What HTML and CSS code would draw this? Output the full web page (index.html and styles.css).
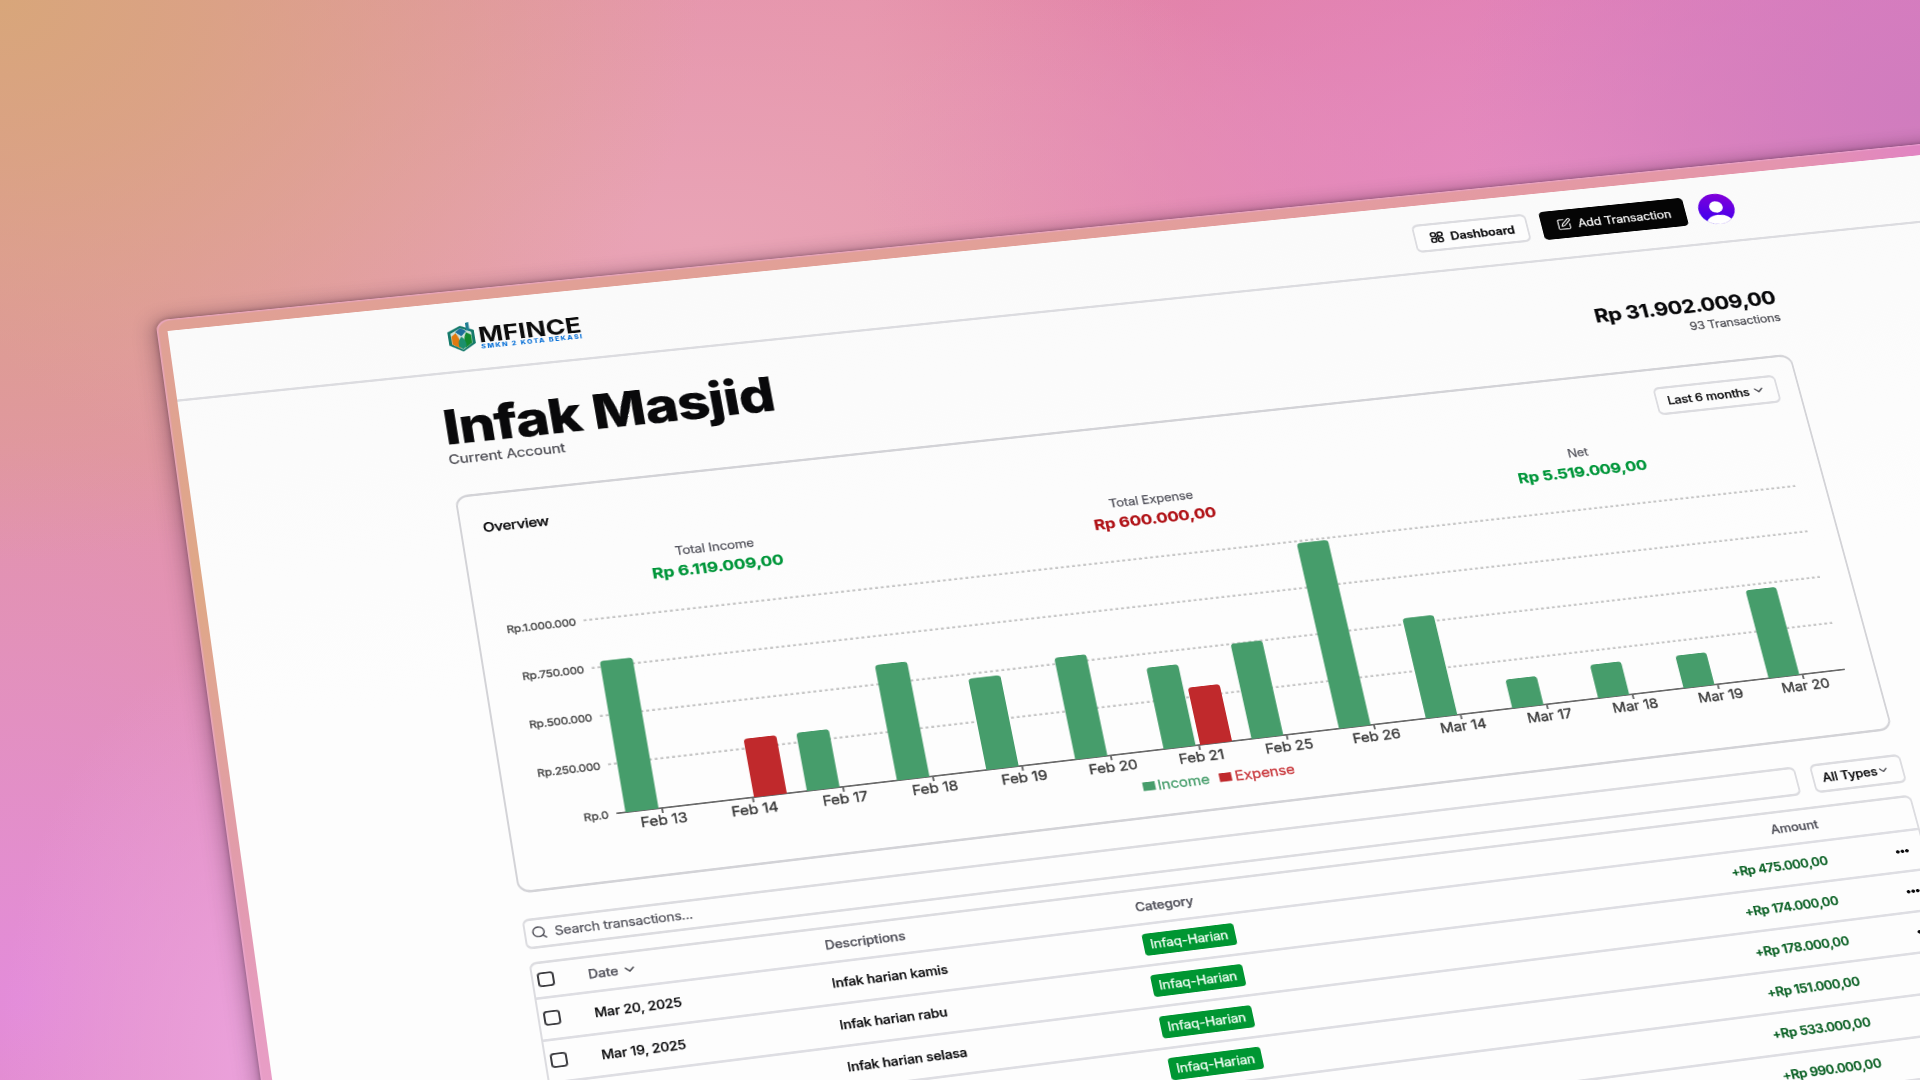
FILE: index.html
```html
<!DOCTYPE html>
<html lang="en">
<head>
<meta charset="utf-8">
<title>MFINCE</title>
<link rel="stylesheet" href="styles.css">
</head>
<body>
<div class="stage">
  <div class="frame">
    <div class="window">
      <header class="topbar">
        <svg class="logo" width="142" height="40" viewBox="0 0 142 40">
          <path d="M14 5 L28 12 V29 L14 38.500 L0 29 V12 Z" fill="#157a6b"/>
          <path d="M14 8 L25 14 V28 L14 36 L3 28 V14 Z" fill="#cfe3da"/>
          <path d="M8.500 14 Q13 22 11.500 34 L3.500 28 V18 Z" fill="#e07a10"/>
          <path d="M19.500 14 Q15 22 16.500 34 L24.500 28 V18 Z" fill="#128a2e"/>
          <path d="M14 19 Q19 25 17.800 31.500 L14 35.500 L10.200 31.500 Q9 25 14 19 Z" fill="#1b8f6d"/>
          <path d="M14 8 L20 12.500 L14 18.500 L8 12.500 Z" fill="#1d6f9c"/>
          <path d="M20 2 L23.500 1 V13 L20 11 Z" fill="#1f7f93"/>
          <text class="brand" x="32" y="29" textLength="109" lengthAdjust="spacingAndGlyphs">MFINCE</text>
          <text class="brand-sub" x="33" y="37.500" textLength="107">SMKN 2 KOTA BEKASI</text>
        </svg>
        <nav class="actions">
          <span class="btn">
            <svg class="icon" viewBox="0 0 24 24"><rect x="3" y="3" width="7.500" height="7.500" rx="3"/><rect x="13.500" y="3" width="7.500" height="7.500" rx="3"/><rect x="3" y="13.500" width="7.500" height="7.500" rx="3"/><rect x="13.500" y="13.500" width="7.500" height="7.500" rx="3"/><path d="M10 14 L14 10"/></svg>
            Dashboard
          </span>
          <span class="btn btn-dark">
            <svg class="icon thin" viewBox="0 0 24 24"><path d="M12 3H5a2 2 0 0 0-2 2v14a2 2 0 0 0 2 2h14a2 2 0 0 0 2-2v-7"/><path d="M18.400 2.600a2.100 2.100 0 0 1 3 3L12.400 14.600l-4 1 1-4z"/></svg>
            Add Transaction
          </span>
          <svg class="avatar" viewBox="0 0 40 40">
            <defs>
              <linearGradient id="av" x1="0.700" y1="0" x2="0.400" y2="1"><stop offset="0" stop-color="#8400d8"/><stop offset="1" stop-color="#3c00f0"/></linearGradient>
              <clipPath id="avc"><circle cx="20" cy="20" r="20"/></clipPath>
            </defs>
            <g clip-path="url(#avc)"><rect width="40" height="40" fill="url(#av)"/><circle cx="20" cy="17.500" r="7.500" fill="#fff"/><ellipse cx="20" cy="39" rx="14.500" ry="11" fill="#fff"/></g>
          </svg>
        </nav>
      </header>

      <main class="content">
        <section class="heading">
          <div>
            <h1 class="title">Infak Masjid</h1>
            <p class="subtitle">Current Account</p>
          </div>
          <div class="balance">
            <p class="balance-value">Rp 31.902.009,00</p>
            <p class="balance-count">93 Transactions</p>
          </div>
        </section>

        <section class="card">
          <div class="card-head">
            <span class="card-title">Overview</span>
            <span class="select">Last 6 months <svg class="chev" viewBox="0 0 24 24"><path d="m6 9 6 6 6-6"/></svg></span>
          </div>
          <div class="stats">
            <div class="stat"><span>Total Income</span><b class="pos">Rp 6.119.009,00</b></div>
            <div class="stat"><span>Total Expense</span><b class="neg">Rp 600.000,00</b></div>
            <div class="stat"><span>Net</span><b class="pos">Rp 5.519.009,00</b></div>
          </div>
          <svg class="chart" width="1408" height="320" viewBox="293 400 1408 320">
            <g class="grid"><path d="M380.200 415.700H1691M380.200 474.800H1691M380.200 533.800H1691M380.200 592.800H1691"/></g>
            <g class="ylab"><text x="372" y="421.500">Rp.1.000.000</text><text x="372" y="480.500">Rp.750.000</text><text x="372" y="539">Rp.500.000</text><text x="372" y="598">Rp.250.000</text><text x="372" y="657">Rp.0</text></g>
            <path class="axis" d="M380.200 652H1691M427 652v6M520.600 652v6M614.200 652v6M707.900 652v6M801.500 652v6M895.100 652v6M988.700 652v6M1082.300 652v6M1176 652v6M1269.600 652v6M1363.200 652v6M1456.800 652v6M1550.400 652v6M1644.100 652v6"/>
            <g class="income">
              <path d="M389.500 652V471.500q0-4 4-4h26q4 0 4 4V652z"/>
              <path d="M576.700 652V585q0-4 4-4h26q4 0 4 4V652z"/>
              <path d="M670.400 652V514q0-4 4-4h26q4 0 4 4V652z"/>
              <path d="M764 652V543.500q0-4 4-4h26q4 0 4 4V652z"/>
              <path d="M857.600 652V530q0-4 4-4h26q4 0 4 4V652z"/>
              <path d="M951.200 652V555q0-4 4-4h26q4 0 4 4V652z"/>
              <path d="M1044.800 652V537.500q0-4 4-4h26q4 0 4 4V652z"/>
              <path d="M1138.500 652V422.200q0-4 4-4h26q4 0 4 4V652z"/>
              <path d="M1232.100 652V530.200q0-4 4-4h26q4 0 4 4V652z"/>
              <path d="M1325.700 652V620q0-4 4-4h26q4 0 4 4V652z"/>
              <path d="M1419.300 652V614q0-4 4-4h26q4 0 4 4V652z"/>
              <path d="M1512.900 652V615q0-4 4-4h26q4 0 4 4V652z"/>
              <path d="M1606.600 652V544q0-4 4-4h26q4 0 4 4V652z"/>
              <rect x="921.500" y="689" width="13" height="10.500"/>
            </g>
            <g class="expense">
              <path d="M521.900 652V585q0-4 4-4h26q4 0 4 4V652z"/>
              <path d="M990 652V585q0-4 4-4h26q4 0 4 4V652z"/>
              <rect x="1002.500" y="689" width="13" height="10.500"/>
            </g>
            <g class="xlab"><text x="427" y="672">Feb 13</text><text x="520.600" y="672">Feb 14</text><text x="614.200" y="672">Feb 17</text><text x="707.900" y="672">Feb 18</text><text x="801.500" y="672">Feb 19</text><text x="895.100" y="672">Feb 20</text><text x="988.700" y="672">Feb 21</text><text x="1082.300" y="672">Feb 25</text><text x="1176" y="672">Feb 26</text><text x="1269.600" y="672">Mar 14</text><text x="1363.200" y="672">Mar 17</text><text x="1456.800" y="672">Mar 18</text><text x="1550.400" y="672">Mar 19</text><text x="1644.100" y="672">Mar 20</text></g>
            <text class="leg leg-income" x="937" y="700">Income</text>
            <text class="leg leg-expense" x="1019" y="700">Expense</text>
          </svg>
        </section>

        <section class="filters">
          <div class="search"><svg class="icon" viewBox="0 0 24 24"><circle cx="11" cy="11" r="8"/><path d="m21 21-4.300-4.300"/></svg>Search transactions...</div>
          <div class="types">All Types<svg class="chev" viewBox="0 0 24 24"><path d="m6 9 6 6 6-6"/></svg></div>
        </section>

        <section class="table">
          <div class="row head"><i class="check"></i><span class="date-head">Date <svg class="chev" viewBox="0 0 24 24"><path d="m6 9 6 6 6-6"/></svg></span><span>Descriptions</span><span>Category</span><span>Amount</span></div>
          <div class="row"><i class="check"></i><span>Mar 20, 2025</span><span>Infak harian kamis</span><span><em class="badge">Infaq-Harian</em></span><span class="amount">+Rp 475.000,00</span><i class="dots"></i></div>
          <div class="row"><i class="check"></i><span>Mar 19, 2025</span><span>Infak harian rabu</span><span><em class="badge">Infaq-Harian</em></span><span class="amount">+Rp 174.000,00</span><i class="dots"></i></div>
          <div class="row"><i class="check"></i><span>Mar 18, 2025</span><span>Infak harian selasa</span><span><em class="badge">Infaq-Harian</em></span><span class="amount">+Rp 178.000,00</span><i class="dots"></i></div>
          <div class="row"><i class="check"></i><span></span><span></span><span><em class="badge">Infaq-Harian</em></span><span class="amount">+Rp 151.000,00</span><i class="dots"></i></div>
          <div class="row"><i class="check"></i><span></span><span></span><span></span><span class="amount">+Rp 533.000,00</span><i class="dots"></i></div>
          <div class="row"><i class="check"></i><span></span><span></span><span></span><span class="amount">+Rp 990.000,00</span><i class="dots"></i></div>
          <div class="row"></div>
        </section>
      </main>
    </div>
  </div>
</div>
</body>
</html>
```
FILE: styles.css
```css
* { box-sizing: border-box; }
html, body { margin: 0; height: 100%; overflow: hidden; }
body {
  font-family: Inter, "Liberation Sans", sans-serif;
  color: #09090b;
  letter-spacing: -0.01em;
  -webkit-text-stroke: 0.25px currentColor;
}
h1, p { margin: 0; }

.stage {
  width: 1920px;
  height: 1080px;
  overflow: hidden;
  background:
    radial-gradient(ellipse 700px 560px at 0 0, #d8a67a 0%, #d8a67ac0 30%, #d8a67a00 100%),
    radial-gradient(ellipse 460px 360px at 1920px 110px, #d07cbe 0%, #d07cbe00 100%),
    radial-gradient(ellipse 700px 300px at 1560px 180px, #e58cc0 0%, #e58cc000 100%),
    radial-gradient(ellipse 760px 300px at 700px 240px, #e9a4b6 0%, #e9a4b600 100%),
    radial-gradient(ellipse 260px 420px at 260px 1060px, #eba2dc 0%, #eba2dc00 100%),
    radial-gradient(ellipse 500px 560px at 20px 1000px, #e38cda 0%, #e38cda00 100%),
    linear-gradient(90deg, #e294a8 0%, #e694ac 45%, #e281a6 62%, #de78c0 100%);
}

/* The browser window lies on a tilted plane, seen in perspective */
.frame {
  width: 2256px;
  height: 1400px;
  padding: 15px 15px 15px 11px;
  border-radius: 14px;
  transform-origin: 0 0;
  transform: matrix3d(0.972157, -0.0869527, 0, 0.0000305233, 0.0982337, 0.758452, 0, -0.000064023, 0, 0, 1, 0, 156.6044, 323.0285, 0, 1.00806744);
  background:
    linear-gradient(180deg, #e0a096 0, #dfa886 330px, #e29ab0 700px, #eb9fd0 1000px) 0 15px / 11px 100% no-repeat,
    linear-gradient(90deg, #e0a094 0, #e2a098 900px, #e498a6 1650px, #e494b0 1800px, #e07fc8 1990px);
  box-shadow:
    inset 1.500px 1.500px 1px rgba(240, 170, 215, 0.6),
    0 0 5px rgba(60, 30, 50, 0.4),
    -2px 0 22px rgba(60, 30, 50, 0.45);
}
.window {
  height: 100%;
  background: linear-gradient(180deg, #fafafa, #fdfdfd 500px);
}

.topbar {
  height: 91px;
  display: flex;
  align-items: center;
  justify-content: space-between;
  padding: 0 523px 0 289px;
  border-bottom: 3px solid #dcdce0;
}
.logo { margin-top: 3px; letter-spacing: 0; }
.brand { font-size: 27px; font-weight: 700; fill: #0c0c0c; }
.brand-sub { font-size: 7.5px; font-weight: 800; fill: #0b72d8; }
.actions { display: flex; align-items: center; gap: 15px; }
.btn {
  display: flex;
  align-items: center;
  gap: 7px;
  height: 38px;
  padding: 0 14px 0 15px;
  border: solid #dcdce0;
  border-width: 3px 2px;
  border-radius: 7px;
  background: #fdfdfd;
  font-size: 14px;
  font-weight: 600;
}
.btn-dark { padding: 0 15px; border-color: #050505; border-radius: 5px; background: #050505; color: #fafafa; font-weight: 400; }
.icon { width: 17px; height: 17px; fill: none; stroke: currentColor; stroke-width: 2.5; stroke-linecap: round; stroke-linejoin: round; }
.icon.thin { stroke-width: 1.8; }
.avatar { width: 41px; height: 41px; }

.content { width: 1456px; margin-left: 269px; padding-top: 36.5px; }
.heading { display: flex; justify-content: space-between; align-items: flex-end; margin-bottom: 34px; }
.title { font-size: 60px; line-height: 60px; font-weight: 800; letter-spacing: -0.95px; }
.subtitle { margin-top: -1px; font-size: 16px; line-height: 24px; color: #4b4b52; }
.balance { text-align: right; padding-bottom: 4.5px; }
.balance-value { font-size: 24px; line-height: 32px; font-weight: 700; letter-spacing: -0.016em; }
.balance-count { font-size: 14px; line-height: 20px; color: #4b4b52; letter-spacing: -0.015em; }

.card {
  height: 488px;
  padding: 22px 22px 0;
  border: solid #d3d3d7;
  border-width: 3px 2px;
  border-radius: 14px;
}
.card-head { display: flex; justify-content: space-between; align-items: center; }
.card-title { font-size: 16px; font-weight: 500; letter-spacing: -0.5px; }
.select {
  display: flex;
  align-items: center;
  justify-content: space-between;
  width: 138px;
  height: 37px;
  padding: 0 12px 0 11px;
  border: solid #dcdce0;
  border-width: 3px 2px;
  border-radius: 7px;
  font-size: 14px;
  font-weight: 500;
}
.chev { width: 16px; height: 16px; fill: none; stroke: #3f3f46; stroke-width: 2.4; stroke-linecap: round; stroke-linejoin: round; }
.stats { display: flex; justify-content: space-around; margin-top: 26px; }
.stat { display: flex; flex-direction: column; align-items: center; font-size: 14px; line-height: 20px; color: #52525b; }
.stat b { font-size: 18px; line-height: 28px; font-weight: 700; margin-top: 1px; }
.stat .pos { color: #00963a; }
.stat .neg { color: #b01217; }

.chart { display: block; margin-top: 18.5px; }
.grid { fill: none; stroke: #c4c4c4; stroke-width: 2.4; stroke-dasharray: 3 3; }
.axis { fill: none; stroke: #6a6a6a; stroke-width: 2; }
.income { fill: #469d6b; }
.expense { fill: #c0292c; }
.ylab { font-size: 12px; fill: #4a4a4a; -webkit-text-stroke: 0; stroke: #4a4a4a; stroke-width: 0.4px; text-anchor: end; }
.xlab { font-size: 16px; fill: #3c3c3c; -webkit-text-stroke: 0; stroke: #3c3c3c; stroke-width: 0.4px; text-anchor: middle; }
.leg { font-size: 16px; }
.leg-income { fill: #469d6b; stroke: #469d6b; stroke-width: 0.3px; }
.leg-expense { fill: #c8353a; stroke: #c8353a; stroke-width: 0.3px; }

.filters { display: flex; gap: 16px; margin-top: 30px; }
.search, .types {
  display: flex;
  align-items: center;
  height: 36px;
  border: solid #dcdce0;
  border-width: 3px 2px;
  border-radius: 7px;
  font-size: 14px;
}
.search { flex: 1; gap: 7px; margin-left: -1px; padding-left: 5px; color: #52525b; }
.search .icon { stroke-width: 2.2; }
.types { width: 100px; padding-left: 9px; font-weight: 500; }
.types .chev { width: 14px; height: 15px; }

.table { margin: 15px 0 0 -1px; border: solid #dcdce0; border-width: 3px 2px; border-radius: 8px; }
.row {
  display: grid;
  grid-template-columns: 55px 241px 321.5px 1fr 105px;
  align-items: center;
  height: 49px;
  border-bottom: 3px solid #dedee3;
  font-size: 14px;
  font-weight: 500;
}
.row > span:nth-child(4) { grid-column: 4; grid-row: 1; }
.row > span:nth-child(5) { grid-column: 4; grid-row: 1; justify-self: end; }
.row > .dots { grid-column: 5; grid-row: 1; }
.head { height: 41px; color: #52525b; }
.date-head { display: flex; align-items: center; gap: 4px; }
.check { width: 17px; height: 17px; margin-left: 4px; border: 2px solid #3a3a3e; border-radius: 4px; }
.badge {
  display: inline-block;
  height: 26px;
  padding: 0 7.5px;
  border-radius: 4px;
  background: #009632;
  color: #f2fff5;
  font-style: normal;
  font-weight: 400;
  line-height: 26px;
}
.amount { color: #0b6125; font-weight: 600; letter-spacing: -0.03em; }
.dots {
  width: 14px;
  height: 4px;
  margin-left: 75px;
  background: radial-gradient(circle at 2px 2px, #09090b 0 1.700px, transparent 2.200px) 0 0 / 5px 4px;
}
```
